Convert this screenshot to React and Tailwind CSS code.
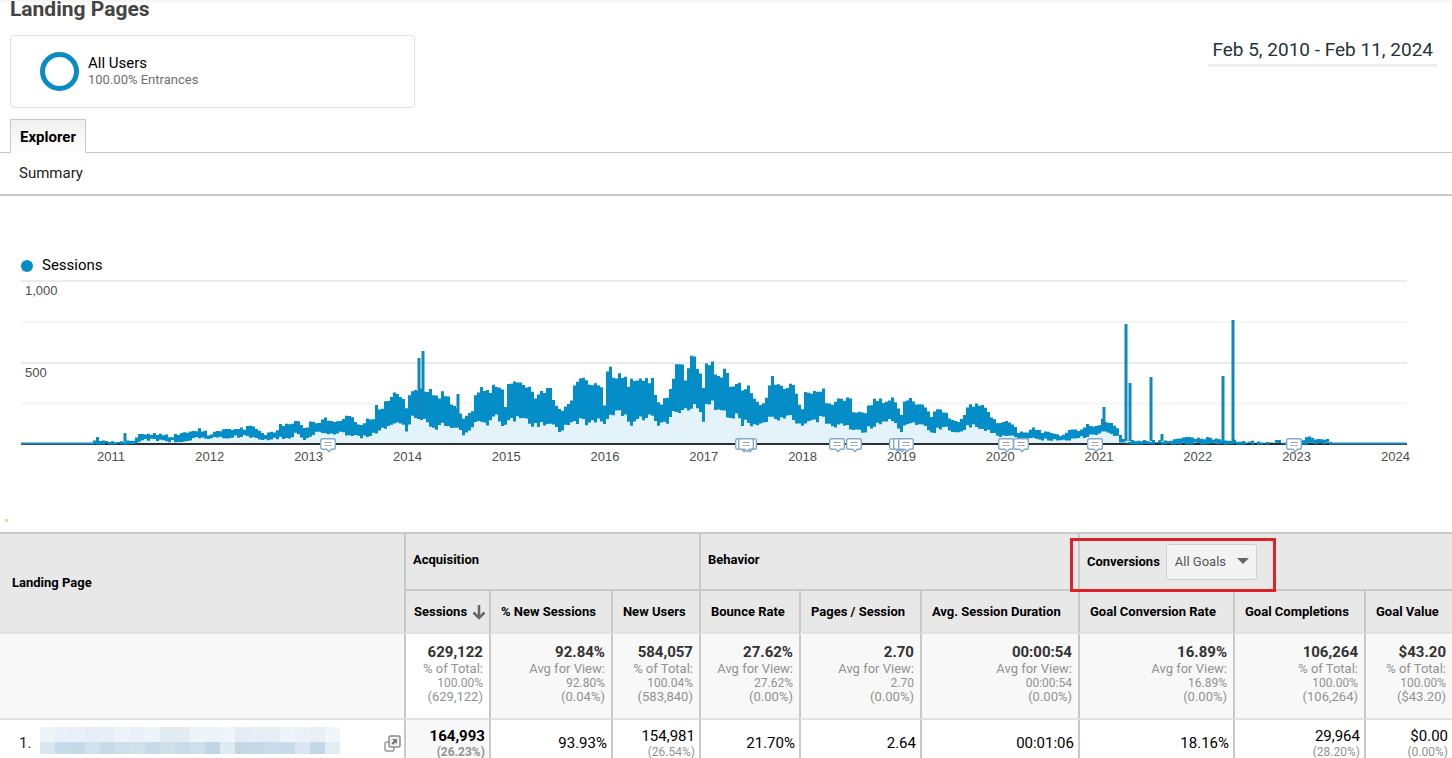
import { clsx } from 'clsx';

const years = [2011, 2012, 2013, 2014, 2015, 2016, 2017, 2018, 2019, 2020, 2021, 2022, 2023, 2024];

// [x, highest, lowest] of the daily sessions line, in chart units
const envelope = [
  [21, 443, 444], [92, 443, 444], [94, 439, 444], [97, 437, 444], [100, 440, 444], [105, 440, 444], [108, 442, 444],
  [122, 441, 444], [128, 441, 444], [135, 439, 444], [138, 434, 443], [140, 436, 441], [145, 433, 440], [150, 433, 440],
  [158, 434, 440], [163, 435, 441], [170, 436, 441], [180, 434, 441], [190, 431, 439], [198, 429, 438], [205, 430, 438],
  [208, 435, 440], [215, 431, 437], [225, 430, 438], [235, 429, 437], [245, 428, 436], [252, 424, 437], [258, 430, 439],
  [265, 434, 440], [275, 431, 439], [280, 425, 438], [290, 423, 437], [295, 421, 434], [300, 423, 436], [305, 430, 440],
  [310, 422, 436], [318, 422, 432], [325, 418, 432], [330, 422, 434], [340, 420, 433], [347, 414, 434], [355, 421, 435],
  [360, 425, 438], [368, 418, 435], [374, 417, 434], [377, 400, 430], [379, 408, 430], [385, 403, 430], [390, 402, 426],
  [392, 394, 423], [398, 394, 424], [403, 400, 427], [405, 401, 429], [407, 415, 431], [410, 387, 418], [415, 388, 419],
  [425, 388, 422], [433, 391, 425], [438, 397, 429], [443, 392, 421], [450, 400, 431], [457, 406, 427], [462, 420, 435],
  [467, 413, 430], [472, 410, 429], [475, 393, 424], [482, 387, 420], [488, 393, 423], [494, 383, 414], [498, 388, 419],
  [503, 392, 424], [506, 412, 427], [507, 380, 417], [512, 382, 418], [517, 384, 418], [524, 386, 420], [531, 386, 426],
  [533, 400, 426], [540, 390, 424], [545, 392, 425], [550, 388, 424], [553, 401, 427], [557, 409, 429], [561, 410, 431],
  [567, 403, 423], [571, 401, 424], [573, 385, 423], [579, 384, 421], [581, 373, 419], [584, 382, 422], [590, 381, 422],
  [597, 381, 418], [602, 387, 421], [604, 403, 424], [606, 374, 423], [611, 366, 419], [613, 380, 414], [616, 378, 414],
  [617, 365, 413], [620, 380, 414], [623, 371, 414], [628, 385, 423], [633, 379, 421], [643, 381, 418], [652, 378, 418],
  [655, 391, 424], [660, 405, 427], [663, 397, 420], [669, 396, 422], [672, 377, 413], [675, 368, 415], [682, 365, 410],
  [686, 382, 410], [689, 361, 408], [693, 355, 407], [697, 368, 410], [701, 376, 414], [704, 392, 423], [706, 366, 402],
  [712, 364, 404], [717, 374, 412], [723, 374, 411], [725, 368, 417], [729, 384, 418], [738, 381, 416], [742, 388, 423],
  [747, 386, 421], [753, 395, 425], [758, 405, 423], [765, 403, 422], [769, 386, 420], [772, 376, 417], [776, 384, 418],
  [783, 388, 418], [792, 384, 418], [797, 398, 422], [802, 408, 426], [804, 389, 421], [810, 391, 420], [817, 391, 421],
  [823, 388, 417], [827, 405, 425], [832, 404, 427], [839, 398, 425], [850, 399, 427], [853, 410, 430], [858, 411, 429],
  [861, 408, 430], [863, 419, 435], [868, 406, 428], [876, 397, 425], [883, 402, 423], [888, 399, 421], [894, 399, 420],
  [898, 409, 427], [901, 416, 431], [904, 402, 424], [909, 399, 423], [916, 402, 424], [923, 403, 426], [928, 411, 431],
  [931, 415, 434], [938, 409, 428], [945, 412, 427], [950, 418, 432], [957, 421, 433], [963, 418, 431], [968, 405, 426],
  [975, 405, 426], [982, 404, 427], [987, 412, 431], [993, 418, 434], [999, 425, 437], [1003, 421, 436], [1012, 424, 437],
  [1018, 431, 439], [1025, 432, 438], [1033, 427, 437], [1040, 431, 439], [1053, 432, 440], [1061, 435, 441], [1070, 428, 439],
  [1080, 430, 438], [1086, 425, 436], [1093, 425, 434], [1098, 427, 435], [1102, 419, 432], [1108, 423, 432], [1113, 424, 435],
  [1118, 427, 437], [1121, 436, 443], [1124, 441, 444], [1140, 440, 444], [1165, 440, 444], [1175, 439, 444], [1190, 437, 444],
  [1200, 439, 444], [1210, 437, 444], [1220, 440, 444], [1250, 441, 444], [1280, 441, 444], [1300, 440, 444], [1310, 437, 444],
  [1320, 439, 444], [1329, 439, 444], [1331, 443, 444], [1407, 443, 444],
];

const peaks = [
  [67, 441], [125, 433], [419, 358], [423, 351], [458, 394], [1104, 407], [1126, 324],
  [1130, 383], [1151, 377], [1162, 434], [1223, 376], [1233, 320],
];

const notes = [328, 743, 749, 746, 837, 854, 897, 901, 906, 1006, 1021, 1095, 1294];

// Repeatable pseudo-random number between 0 and 1
const jitter = (n) => {
  const v = Math.sin(n * 127.1) * 43758.5453;
  return v - Math.floor(v);
};

const sample = (x) => {
  const i = Math.max(1, envelope.findIndex((p) => p[0] >= x));
  const [x0, t0, b0] = envelope[i - 1];
  const [x1, t1, b1] = envelope[i];
  const k = (x - x0) / (x1 - x0);
  return [t0 + (t1 - t0) * k, b0 + (b1 - b0) * k];
};

const buildPaths = () => {
  const top = [];
  const bottom = [];
  for (let x = 21; x < 1407; x += 3) {
    const [t, b] = sample(x + 1);
    const size = b - t;
    const swing = size > 2 ? Math.max(size * 0.2, 3) : 0;
    const high = (t + (jitter(x) - 0.35) * swing).toFixed(1);
    const low = Math.min(444.5, b + (jitter(x + 5000) - 0.5) * swing).toFixed(1);
    top.push(`${x},${high}`, `${x + 3},${high}`);
    bottom.unshift(`${x + 3},${low}`, `${x},${low}`);
  }
  return {
    band: `M${top.join('L')}L${bottom.join('L')}Z`,
    area: `M${top.join('L')}L1407,444L21,444Z`,
  };
};

const { band, area } = buildPaths();

const NoteMarker = ({ x }) => (
  <g transform={`translate(${x - 8} 438)`}>
    <path
      d="M2.500.7h11q1.800 0 1.800 1.800v7q0 1.800-1.800 1.800h-2.200l-2.300 2.500-2.300-2.500H2.500Q.7 11.300.7 9.500v-7Q.7.7 2.500.7Z"
      fill="#fff"
      stroke="#86aacb"
      strokeWidth="1.400"
    />
    <path d="M4.500 4.500h7M4.500 7.500h3M8.500 7.500h3" stroke="#9a9a9a" />
  </g>
);

const SessionsChart = () => (
  <svg viewBox="21 276 1386 194" className="block w-full overflow-visible" role="img" aria-label="Sessions over time">
    <path d="M21 281H1407M21 363H1407" stroke="#ebebeb" strokeWidth="2" />
    <path d="M21 322H1407M21 403.500H1407" stroke="#f6f6f6" strokeWidth="2" />
    <path d={area} fill="#e4f2f9" />
    <path d="M21 444H1407" stroke="#2b2f31" strokeWidth="2" />
    <path d={band} fill="#058dc7" />
    <path d="M21 443.500H94M1330 443.500H1406" stroke="#1b8abb" strokeWidth="2" />
    {peaks.map(([x, y]) => (
      <path key={x} d={`M${x} ${sample(x)[1] - 3}V${y}`} stroke="#0f88bd" strokeWidth="3" />
    ))}
    {notes.map((x) => (
      <NoteMarker key={x} x={x} />
    ))}
    <g fill="#4d4d4d" fontSize="13" fontFamily="'Liberation Sans', Arial, sans-serif">
      <text x="25" y="295">1,000</text>
      <text x="25" y="377">500</text>
      {years.map((year, i) => (
        <text key={year} x={111 + i * 98.8} y="461" textAnchor="middle">
          {year}
        </text>
      ))}
    </g>
  </svg>
);

const groups = [
  { label: 'Acquisition', span: 3 },
  { label: 'Behavior', span: 3 },
  { label: 'Conversions', span: 3, goals: true },
];

const columns = [
  { label: 'Sessions', width: 'w-[85px]', total: '629,122', note: '% of Total:', base: '100.00%', diff: '(629,122)', value: '164,993', share: '(26.23%)', sorted: true },
  { label: '% New Sessions', width: 'w-[122px]', total: '92.84%', note: 'Avg for View:', base: '92.80%', diff: '(0.04%)', value: '93.93%' },
  { label: 'New Users', width: 'w-[88px]', total: '584,057', note: '% of Total:', base: '100.04%', diff: '(583,840)', value: '154,981', share: '(26.54%)' },
  { label: 'Bounce Rate', width: 'w-[100px]', total: '27.62%', note: 'Avg for View:', base: '27.62%', diff: '(0.00%)', value: '21.70%' },
  { label: 'Pages / Session', width: 'w-[121px]', total: '2.70', note: 'Avg for View:', base: '2.70', diff: '(0.00%)', value: '2.64' },
  { label: 'Avg. Session Duration', width: 'w-[158px]', total: '00:00:54', note: 'Avg for View:', base: '00:00:54', diff: '(0.00%)', value: '00:01:06' },
  { label: 'Goal Conversion Rate', width: 'w-[155px]', total: '16.89%', note: 'Avg for View:', base: '16.89%', diff: '(0.00%)', value: '18.16%' },
  { label: 'Goal Completions', width: 'w-[131px]', total: '106,264', note: '% of Total:', base: '100.00%', diff: '(106,264)', value: '29,964', share: '(28.20%)' },
  { label: 'Goal Value', width: 'w-[88px]', total: '$43.20', note: '% of Total:', base: '100.00%', diff: '($43.20)', value: '$0.00', share: '(0.00%)' },
];

const mosaic = [
  ['#eef4f7', '#e9f0f9', '#e9eff8', '#e7edf7', '#e8edf7', '#edf3f8', '#e9f0f9', '#eef4f9', '#e0ebf2', '#e2eaf2', '#edf3f7', '#edf3f7', '#f0f5fa', '#e6ecf6', '#e8edf6', '#e8edf5', '#edf3f8', '#ebf0fa', '#e9eff4', '#f1f7f9'],
  ['#dae7f1', '#c8dbea', '#c6d9e6', '#d0e2ee', '#c8d9e7', '#cedfea', '#d0e1ec', '#c8dae9', '#cfe0eb', '#c9dce8', '#cddfeb', '#c0d5e7', '#dfebf2', '#c4d7e5', '#c5d8e6', '#c9dceb', '#c8dbea', '#dae6f1', '#c4d7e6', '#e1ecf3'],
];

const RedactedUrl = () => (
  <svg width="300" height="27" className="mb-1.5" aria-hidden="true">
    {mosaic.map((row, r) =>
      row.map((fill, c) => (
        <rect key={`${r}-${c}`} x={c * 15} y={r * 15} width="15" height={r === 0 ? 15 : 12} fill={fill} />
      ))
    )}
  </svg>
);

const OpenIcon = () => (
  <svg width="17" height="17" viewBox="0 0 17 17" fill="none" aria-hidden="true">
    <rect x="1" y="7" width="9" height="9" rx="1.500" stroke="#999" strokeWidth="1.500" />
    <rect x="5" y="1" width="11" height="11" rx="1.500" fill="#f1f1f1" stroke="#8c8c8c" strokeWidth="1.500" />
    <path d="M8 4h5v5l-1.600-1.600-2.400 2.400-1.600-1.600L9.800 5.800Z" fill="#777" />
  </svg>
);

const SortArrow = () => (
  <svg width="14" height="16" viewBox="0 0 14 16" fill="none" stroke="#666" strokeWidth="2.500" aria-hidden="true">
    <path d="M7 1v13M1.500 8.500L7 14l5.500-5.500" />
  </svg>
);

const GoalPicker = () => (
  <div className="flex items-center gap-[6px]">
    <label htmlFor="goals">Conversions</label>
    <div className="relative">
      <select
        id="goals"
        className="block h-9 w-[91px] appearance-none rounded-[3px] border border-[#d0d0d0] bg-[#f3f3f3] pl-2 text-[13px] font-normal text-[#555]"
      >
        <option>All Goals</option>
      </select>
      <svg width="12" height="6" viewBox="0 0 12 6" className="pointer-events-none absolute top-[14px] right-2" aria-hidden="true">
        <path d="M0 0h12L6 6Z" fill="#666" />
      </svg>
    </div>
    <div className="pointer-events-none absolute top-1 -left-2.5 z-10 h-[54px] w-[206px] border-3 border-[#de2229]" />
  </div>
);

const LandingPageTable = () => (
  <table className="w-full min-w-[1300px] table-fixed border-separate border-spacing-0 border-t-2 border-[#c9c9c9]">
    <colgroup>
      <col />
      {columns.map((col) => (
        <col key={col.label} className={col.width} />
      ))}
    </colgroup>
    <thead className="bg-[#e8e8e8] text-left text-[13px] leading-4 font-bold text-black">
      <tr>
        <th rowSpan={2} scope="col" className="border-b-2 border-[#e3e3e3] pl-3">
          Landing Page
        </th>
        {groups.map((group) => (
          <th
            key={group.label}
            colSpan={group.span}
            scope="colgroup"
            className="relative h-[57px] border-b-2 border-l-2 border-[#c9c9c9] py-0 pl-[7px]"
          >
            {group.goals ? <GoalPicker /> : <div className="pb-1">{group.label}</div>}
          </th>
        ))}
      </tr>
      <tr>
        {columns.map((col) => (
          <th
            key={col.label}
            scope="col"
            className={clsx(
              'h-[43px] border-b-2 border-l-2 border-b-[#e3e3e3] border-l-[#c9c9c9] py-0 whitespace-nowrap',
              col.sorted ? 'pl-2' : 'pl-2.5'
            )}
          >
            <div className="flex items-center gap-[5px]">
              {col.label}
              {col.sorted && <SortArrow />}
            </div>
          </th>
        ))}
      </tr>
    </thead>
    <tbody className="text-right">
      <tr>
        <td className="border-b-2 border-[#e3e3e3] bg-[#f8f8f8]" />
        {columns.map((col) => (
          <td
            key={col.label}
            className={clsx(
              'h-[86px] border-b-2 border-l-2 border-b-[#e3e3e3] border-l-[#c9c9c9] pt-2 pr-1.5 pb-3.5 text-[13px] leading-[14px] text-[#929292]',
              col.sorted ? 'bg-white' : 'bg-[#f8f8f8]'
            )}
          >
            <div className="text-[15px] leading-5 font-bold text-[#333]">{col.total}</div>
            <div>{col.note}</div>
            <div className="text-xs leading-[14px]">{col.base}</div>
            <div>{col.diff}</div>
          </td>
        ))}
      </tr>
      <tr>
        <td className="p-0 pl-[19px]">
          <div className="flex items-center pr-[3px] text-[15px] text-[#222]">
            <span className="w-[21px] text-left">1.</span>
            <RedactedUrl />
            <a href="#open" aria-label="Open landing page" className="ml-auto">
              <OpenIcon />
            </a>
          </div>
        </td>
        {columns.map((col) => (
          <td
            key={col.label}
            className={clsx(
              'h-[46px] border-l-2 border-[#c9c9c9] py-0 pr-1 text-[15px] leading-[18px] text-black',
              col.sorted && 'bg-[#f8f8f8] font-bold'
            )}
          >
            <div>{col.value}</div>
            {col.share && <div className="text-xs leading-[14px] text-[#929292]">{col.share}</div>}
          </td>
        ))}
      </tr>
    </tbody>
  </table>
);

const App = () => (
  <main className="h-screen overflow-hidden bg-white font-['Roboto',sans-serif] text-[15px] text-black">
    <header className="flex items-start justify-between bg-linear-to-b from-[#f3f3f3] to-white to-[4px] pr-[15px] pl-2.5">
      <div>
        <h1 className="text-[21px] leading-[18px] font-bold text-[#444]">Landing Pages</h1>
        <section className="mt-[17px] flex h-[73px] w-[405px] items-center gap-[9px] rounded-sm border border-[#e2e2e2] pl-[29px]">
          <div className="size-[39px] rounded-full border-5 border-[#0b8bc5]" />
          <div className="pb-0.5">
            <div className="leading-[18px]">All Users</div>
            <div className="text-[13px] leading-4 text-[#6f6f6f]">100.00% Entrances</div>
          </div>
        </section>
      </div>
      <button type="button" className="mt-[37px] border-b-3 border-[#eee] px-1 pb-px text-[19px] leading-[26px] text-[#263238]">
        Feb 5, 2010 - Feb 11, 2024
      </button>
    </header>

    <nav className="mt-[11px] border-b border-[#c9c9c9] pl-2.5">
      <button
        type="button"
        className="-mb-px block h-[34px] border border-b-0 border-[#c9c9c9] bg-linear-to-b from-[#f0f0f0] to-white px-[9px] pt-0.5 font-bold"
      >
        Explorer
      </button>
    </nav>
    <nav className="flex h-[43px] items-center border-b-2 border-[#c9c9c9] pl-[19px]">
      <a href="#summary" className="text-[#222]">Summary</a>
    </nav>

    <section className="pt-[59px] pr-[45px] pl-[21px]">
      <div className="flex h-[21px] items-center gap-[9px]">
        <span className="size-3 rounded-full bg-[#058dc7]" />
        Sessions
      </div>
      <SessionsChart />
    </section>

    <div className="flex h-[62px] items-end pb-[10px] pl-[5px]">
      <span className="size-[3px] bg-[#e3dd94]" />
    </div>

    <LandingPageTable />
  </main>
);

export default App;
